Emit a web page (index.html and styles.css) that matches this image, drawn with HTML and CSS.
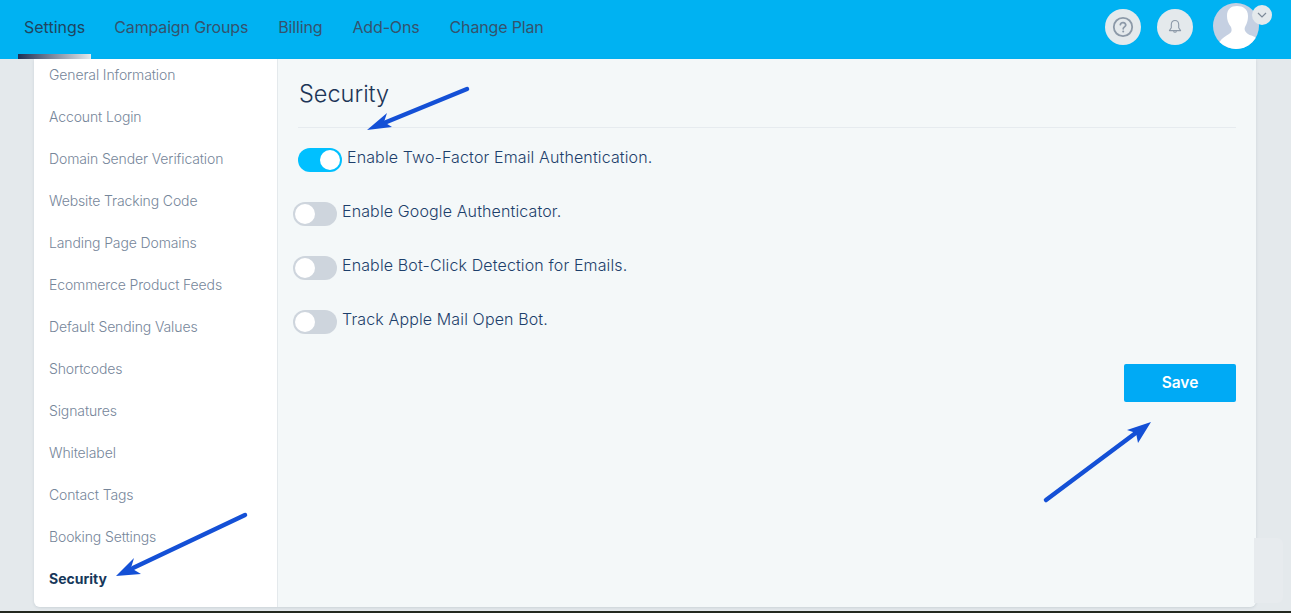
FILE: index.html
```html
<!DOCTYPE html>
<html>
<head>
    <meta charset="utf-8">
    <link rel="stylesheet" href="styles.css">
</head>
<body>
    <div class="topbar">
        <div class="nav">
            <a class="nav-item nav-active">Settings</a>
            <a class="nav-item">Campaign Groups</a>
            <a class="nav-item">Billing</a>
            <a class="nav-item">Add-Ons</a>
            <a class="nav-item">Change Plan</a>
        </div>
        <div class="top-actions">
            <div class="round-btn">
                <svg width="22" height="22" viewBox="0 0 22 22" fill="none" stroke="#8c99a8">
                    <circle cx="11" cy="11" r="9.2" stroke-width="1.8"/>
                    <path d="M8.3 8.7a2.8 2.8 0 0 1 5.5.4c0 1.7-2.6 2-2.6 3.7" stroke-width="1.7" stroke-linecap="round"/>
                    <circle cx="11.2" cy="15.6" r="1" fill="#8c99a8" stroke="none"/>
                </svg>
            </div>
            <div class="round-btn">
                <svg width="14" height="16" viewBox="0 0 14 16" fill="none" stroke="#8c99a8" stroke-width="1.1">
                    <path d="M7 1.5c-2.4 0-3.700 1.800-3.700 4v3.300L1.400 11.600h11.200l-1.900-2.800V5.500c0-2.200-1.300-4-3.700-4z" stroke-linejoin="round"/>
                    <path d="M5.500 12.200a1.600 1.600 0 0 0 3 0"/>
                </svg>
            </div>
            <div class="avatar-wrap">
                <svg class="avatar" width="46" height="46" viewBox="0 0 46 46">
                    <circle cx="23" cy="23" r="23" fill="#c5d0e2"/>
                    <path d="M24 3C30 3 35 6 35 13C35 19 33 22 32 24C31 27 32 29 35 31C38 33 42 33 42.600 35A23 23 0 0 1 6.500 39C9 35 13 33 16 31C19 29 19 27 18 24C15 20 14 17 14 13C14 6 18 3 24 3z" fill="#fff"/>
                </svg>
                <div class="avatar-menu">
                    <svg width="10" height="6" viewBox="0 0 10 6" fill="none" stroke="#7d8a99" stroke-width="1.200">
                        <path d="M1 1l4 4 4-4"/>
                    </svg>
                </div>
            </div>
        </div>
    </div>

    <div class="page">
        <div class="panel">
            <div class="sidebar">
                <a class="side-link">General Information</a>
                <a class="side-link">Account Login</a>
                <a class="side-link">Domain Sender Verification</a>
                <a class="side-link">Website Tracking Code</a>
                <a class="side-link">Landing Page Domains</a>
                <a class="side-link">Ecommerce Product Feeds</a>
                <a class="side-link">Default Sending Values</a>
                <a class="side-link">Shortcodes</a>
                <a class="side-link">Signatures</a>
                <a class="side-link">Whitelabel</a>
                <a class="side-link">Contact Tags</a>
                <a class="side-link">Booking Settings</a>
                <a class="side-link side-active">Security</a>
            </div>
            <div class="main">
                <h2 class="title">Security</h2>
                <div class="options">
                    <div class="option option-on">
                        <span class="toggle toggle-on"><span class="knob"></span></span>
                        <span class="option-label">Enable Two-Factor Email Authentication.</span>
                    </div>
                    <div class="option">
                        <span class="toggle"><span class="knob"></span></span>
                        <span class="option-label">Enable Google Authenticator.</span>
                    </div>
                    <div class="option">
                        <span class="toggle"><span class="knob"></span></span>
                        <span class="option-label">Enable Bot-Click Detection for Emails.</span>
                    </div>
                    <div class="option">
                        <span class="toggle"><span class="knob"></span></span>
                        <span class="option-label">Track Apple Mail Open Bot.</span>
                    </div>
                </div>
                <div class="form-actions">
                    <button class="btn-save">Save</button>
                </div>
            </div>
        </div>
        <div class="side-tab"></div>
    </div>
    <div class="bottom-strip"></div>

    <!-- annotation arrows drawn over the screenshot -->
    <svg class="arrows" width="1291" height="613" viewBox="0 0 1291 613">
        <g stroke="#1450d6" stroke-width="4.5" stroke-linecap="round" fill="none">
            <path d="M467 89L384 123"/>
            <path d="M245 515L133 568"/>
            <path d="M1046 500L1137 432"/>
        </g>
        <g fill="#1450d6">
            <path d="M367 130L387 113L384 122L392 127z"/>
            <path d="M116 576L134 558L131 568L141 574z"/>
            <path d="M1151 422L1127 430L1136 433L1138 443z"/>
        </g>
    </svg>
</body>
</html>
```

FILE: styles.css
```css
body {
    margin: 0;
    height: 613px;
    overflow: hidden;
    display: flex;
    flex-direction: column;
    font-family: Inter, 'Liberation Sans', sans-serif;
    background: #e4e9ec;
    color: #1d3557;
}

.topbar {
    height: 59px;
    flex-shrink: 0;
    display: flex;
    justify-content: space-between;
    background: #00b2f2;
}

.nav {
    display: flex;
    padding-left: 18px;
    gap: 18px;
}

.nav-item {
    padding: 0 6px;
    height: 54px;
    line-height: 55px;
    font-size: 16px;
    letter-spacing: -0.15px;
    color: #34536e;
    position: relative;
}

.nav-active {
    margin-right: -1px;
    color: #1f4560;
    letter-spacing: 0;
}

.nav-active::after {
    content: "";
    position: absolute;
    left: 0;
    right: 0;
    bottom: -5px;
    height: 5px;
    background: linear-gradient(90deg, #1d2f55, #e4e9ec);
}

.top-actions {
    display: flex;
    align-items: flex-start;
    gap: 16px;
    padding-top: 3px;
    padding-right: 19px;
}

.round-btn {
    width: 36px;
    height: 36px;
    margin-top: 6px;
    border-radius: 50%;
    background: #e4e9ec;
    display: flex;
    align-items: center;
    justify-content: center;
}

.avatar-wrap {
    position: relative;
    width: 46px;
    height: 46px;
    margin-left: 4px;
    margin-right: 13px;
}

.avatar {
    display: block;
}

.avatar-menu {
    position: absolute;
    left: 39px;
    top: 2px;
    width: 20px;
    height: 20px;
    border-radius: 50%;
    background: #e4e9ec;
    display: flex;
    align-items: center;
    justify-content: center;
}

.page {
    flex: 1;
    display: flex;
    padding: 0 0 4px 34px;
    min-height: 0;
}

.panel {
    width: 1222px;
    display: flex;
    border-radius: 0 0 6px 6px;
    overflow: hidden;
    box-shadow: 0 1px 3px rgba(60, 80, 100, 0.15);
}

.sidebar {
    width: 244px;
    flex-shrink: 0;
    box-sizing: border-box;
    padding-top: 6px;
    background: #fff;
    border-right: 1px solid #e4e9ec;
}

.side-link {
    display: block;
    height: 42px;
    line-height: 20px;
    padding-left: 15px;
    font-size: 14px;
    font-weight: 300;
    letter-spacing: -0.12px;
    color: #76869a;
}

.side-active {
    font-weight: 700;
    letter-spacing: 0;
    color: #16375a;
}

.main {
    flex: 1;
    padding: 0 20px;
    background: #f4f8f9;
}

.title {
    margin: 0;
    height: 69px;
    line-height: 69px;
    padding-left: 1px;
    box-sizing: border-box;
    font-size: 23.5px;
    font-weight: 300;
    color: #1d3557;
    border-bottom: 1px solid #e6ebef;
}

.options {
    padding-top: 20px;
}

.option {
    display: flex;
    align-items: center;
    height: 24px;
    margin-bottom: 30px;
    margin-left: -5px;
    font-size: 16px;
    font-weight: 300;
    letter-spacing: 0.13px;
    color: #1d3f6b;
}

.option-on {
    margin-left: 0;
}

.option-label {
    margin-left: 5px;
    position: relative;
    top: -3px;
}

.toggle {
    width: 44px;
    height: 24px;
    box-sizing: border-box;
    padding: 2px;
    border-radius: 12px;
    background: #ced5dd;
    display: flex;
}

.toggle-on {
    background: #00c0ff;
    justify-content: flex-end;
}

.knob {
    width: 20px;
    height: 20px;
    border-radius: 50%;
    background: #fff;
}

.form-actions {
    display: flex;
    justify-content: flex-end;
}

.btn-save {
    width: 112px;
    height: 38px;
    padding: 0 0 2px;
    border: none;
    border-radius: 2px;
    background: #00aaf5;
    color: #fff;
    font-family: inherit;
    font-size: 15.5px;
    font-weight: 600;
}

.side-tab {
    width: 29px;
    height: 65px;
    margin-top: 479px;
    margin-left: -2px;
    border-radius: 0 6px 6px 0;
    background: #e7ebee;
}

.bottom-strip {
    height: 2px;
    flex-shrink: 0;
    background: #23281f;
}

.arrows {
    position: absolute;
    left: 0;
    top: 0;
    pointer-events: none;
}
```
